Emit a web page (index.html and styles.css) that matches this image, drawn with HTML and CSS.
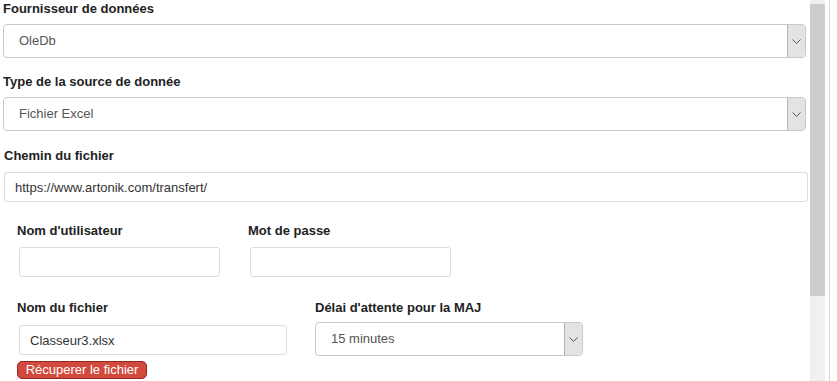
FILE: index.html
```html
<!DOCTYPE html>
<html>
<head>
	<meta charset="utf-8">
	<title>Source de données</title>
	<link rel="stylesheet" href="styles.css">
</head>
<body>
	<div class="page">
		<div class="content">
			<div class="field">
				<label class="lbl">Fournisseur de données</label>
				<div class="select wide">
					<span class="select-value">OleDb</span>
					<span class="select-btn"><svg width="9" height="5" viewBox="0 0 9 5"><path d="M0.5 0.5 L4.5 4.5 L8.5 0.5" fill="none" stroke="#555" stroke-width="1"/></svg></span>
				</div>
			</div>

			<div class="field second">
				<label class="lbl">Type de la source de donnée</label>
				<div class="select wide">
					<span class="select-value">Fichier Excel</span>
					<span class="select-btn"><svg width="9" height="5" viewBox="0 0 9 5"><path d="M0.5 0.5 L4.5 4.5 L8.5 0.5" fill="none" stroke="#555" stroke-width="1"/></svg></span>
				</div>
			</div>

			<div class="field path">
				<label class="lbl">Chemin du fichier</label>
				<input class="txt wide-input" type="text" value="https://www.artonik.com/transfert/">
			</div>

			<div class="sub">
				<div class="row">
					<div class="col col-login">
						<label class="lbl">Nom d'utilisateur</label>
						<input class="txt small" type="text">
					</div>
					<div class="col">
						<label class="lbl">Mot de passe</label>
						<input class="txt small" type="password">
					</div>
				</div>

				<div class="row row-file">
					<div class="col col-file">
						<label class="lbl">Nom du fichier</label>
						<input class="txt medium" type="text" value="Classeur3.xlsx">
						<button class="btn-red">Récuperer le fichier</button>
					</div>
					<div class="col col-delay">
						<label class="lbl">Délai d'attente pour la MAJ</label>
						<div class="select delay">
							<span class="select-value">15 minutes</span>
							<span class="select-btn"><svg width="9" height="5" viewBox="0 0 9 5"><path d="M0.5 0.5 L4.5 4.5 L8.5 0.5" fill="none" stroke="#555" stroke-width="1"/></svg></span>
						</div>
					</div>
				</div>
			</div>
		</div>

		<div class="scrollbar">
			<div class="thumb"></div>
		</div>
		<div class="edge"></div>
	</div>
</body>
</html>
```

FILE: styles.css
```css
body {
	margin: 0;
	background-color: #fff;
	font-family: "Liberation Sans", Arial, sans-serif;
	font-size: 13px;
	color: #222;
}

.page {
	display: flex;
	height: 381px;
	overflow: hidden;
}

.content {
	width: 810px;
	padding-left: 3px;
	box-sizing: border-box;
}

.scrollbar {
	width: 15px;
	background-color: #f0f0f0;
	padding-top: 4px;
	box-sizing: border-box;
}

.thumb {
	height: 292px;
	background-color: #cdcdcd;
}

.edge {
	width: 1px;
	margin-left: 4px;
	background-color: #e6d3cc;
}

.lbl {
	display: block;
	font-weight: bold;
	line-height: 18px;
	margin-bottom: 6px;
}

.field {
	margin-bottom: 15px;
}

.field.second {
	margin-bottom: 16px;
}

.field.path {
	margin-bottom: 0;
	padding-left: 1px;
}

.field.path .lbl {
	margin-bottom: 7px;
}

/* select look */
.select {
	display: flex;
	height: 34px;
	border: 1px solid #c8c8c8;
	border-radius: 4px;
	box-sizing: border-box;
	background-color: #fff;
	color: #555;
}

.select.wide {
	width: 803px;
}

.select.delay {
	width: 268px;
}

.select-value {
	flex: 1;
	line-height: 32px;
	padding-left: 15px;
}

.select-btn {
	width: 17px;
	display: flex;
	align-items: center;
	justify-content: center;
	background-color: #e3e3e3;
	border-left: 1px solid #b4b4b4;
	border-radius: 0 3px 3px 0;
}

/* text inputs */
.txt {
	display: block;
	height: 30px;
	box-sizing: border-box;
	border: 1px solid #dcdcdc;
	border-radius: 3px;
	padding: 0 10px;
	font-family: "Liberation Sans", Arial, sans-serif;
	font-size: 13px;
	color: #333;
	outline: none;
}

.wide-input {
	width: 804px;
}

.small {
	width: 201px;
	margin-left: 2px;
}

.medium {
	width: 268px;
	margin-left: 2px;
}

.sub {
	padding: 20px 0 0 14px;
}

.row {
	display: flex;
}

.col .lbl {
	margin-bottom: 7px;
}

.col-login {
	width: 231px;
}

.col-file {
	width: 298px;
}

.row-file {
	margin-top: 22px;
}

.col-file .lbl {
	margin-bottom: 8px;
}

.col-delay .lbl {
	margin-bottom: 5px;
}

.btn-red {
	display: block;
	margin-top: 6px;
	width: 130px;
	height: 18px;
	padding: 0;
	border: 1px solid #8e2a22;
	border-radius: 5px;
	background-color: #d14a3d;
	color: #fff;
	font-family: "Liberation Sans", Arial, sans-serif;
	font-size: 13px;
	line-height: 16px;
	cursor: pointer;
}
```
